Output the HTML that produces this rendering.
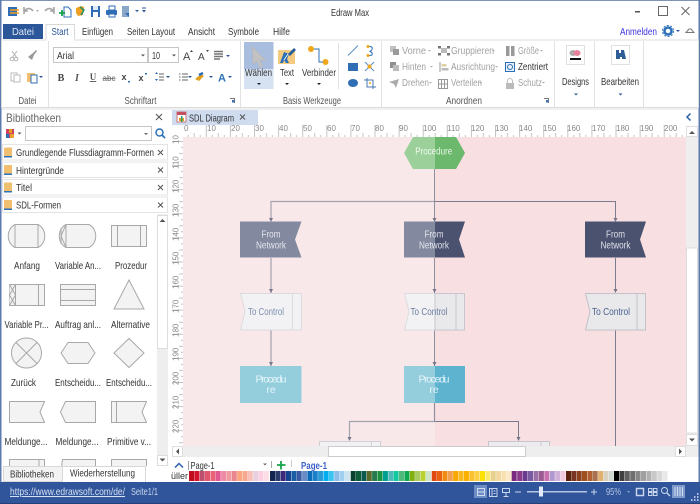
<!DOCTYPE html>
<html><head><meta charset="utf-8"><style>
html,body{margin:0;padding:0;background:#fff}
svg{display:block;font-family:"Liberation Sans",sans-serif;font-size:10.5px}
.g{fill:#a2a2a2}.d{fill:#333}.w{fill:#fff;text-anchor:middle}.m{text-anchor:middle}
.r{font-size:8px;fill:#888}
</style></head><body>
<svg width="700" height="504" viewBox="0 0 700 504" xmlns="http://www.w3.org/2000/svg">
<defs>
<pattern id="tx" x="181.7" y="125" width="24.1" height="12" patternUnits="userSpaceOnUse"><path d="M.5 0V12M6.5 10V12M12.5 8V12M18.5 10V12" stroke="#c4c4c4" stroke-width="1" fill="none"/></pattern>
<pattern id="ty" x="172" y="141" width="11" height="24.1" patternUnits="userSpaceOnUse"><path d="M0 .5H11M9 6.5H11M7 12.5H11M9 18.5H11" stroke="#c4c4c4" stroke-width="1" fill="none"/></pattern>
</defs>
<rect width="700" height="504" fill="#fff"/>
<rect width="700" height="1" fill="#7f92b8"/>
<rect y="0" width="1.5" height="504" fill="#5b7ab0"/>
<rect x="698.5" y="0" width="1.5" height="504" fill="#5b7ab0"/>

<!-- title bar -->
<g>
<path d="M8 7h9v9H8z" fill="#2f6db5"/><path d="M10 10h9M10 13h9" stroke="#f0a020" stroke-width="1.5"/>
<path d="M24 14c0-6 6-7 9-3M24 7v4h4" fill="none" stroke="#a5a5a5" stroke-width="1.6"/><path d="M36 10h3l-1.500 2z" fill="#aaa"/>
<path d="M54 14c0-6-6-7-9-3M54 7v4h-4" fill="none" stroke="#a5a5a5" stroke-width="1.6"/>
<path d="M64 7h4l3 3v7h-7z" fill="#fff" stroke="#2f6db5"/><path d="M59 13h6M62 10v6" stroke="#16a34a" stroke-width="1.800"/>
<path d="M76 8l5-2 3 1-1 8-5 1-2-3z" fill="#f0a020"/><path d="M80 7l4 3-3 5" fill="none" stroke="#1f8f6d" stroke-width="1.500"/>
<path d="M91 6h9v11h-9z" fill="#2f6db5"/><rect x="93" y="6" width="5" height="4" fill="#dce8f5"/><rect x="93" y="12" width="5" height="5" fill="#fff"/>
<path d="M109 6h6v4h-6z" fill="#fff" stroke="#2f6db5"/><rect x="106" y="10" width="11" height="5" rx="1" fill="#2f6db5"/><rect x="109" y="14" width="6" height="3" fill="#fff" stroke="#2f6db5"/>
<path d="M122 6h7v11h-7z" fill="#8aa6c8"/><path d="M125 13l4 4v-4z" fill="#2f6db5"/>
<path d="M135 10h4l-2 2z" fill="#2f5597"/><path d="M142 10h4l-2 2.500z" fill="#2f5597"/><rect x="142" y="7.500" width="4" height="1" fill="#2f5597"/>
<text x="350" y="16" class="m" fill="#333" textLength="38" lengthAdjust="spacingAndGlyphs">Edraw Max</text>
<rect x="635" y="11" width="5" height="1.500" fill="#555"/>
<rect x="658.500" y="6.500" width="9" height="9" fill="none" stroke="#666"/>
<path d="M681.500 7l8 8M689.500 7l-8 8" stroke="#666"/>
</g>

<!-- tabs -->
<rect x="3" y="24" width="40" height="15" fill="#2b579a"/>
<text x="23" y="35" fill="#dfe8f5" text-anchor="middle" textLength="22" lengthAdjust="spacingAndGlyphs">Datei</text>
<rect x="1.500" y="40" width="697" height="67.500" fill="#fff" stroke="#dcdcdc"/>
<path d="M46 40.500V24.500H74.500V40.500" fill="#fff" stroke="#d8d8d8"/><rect x="46.500" y="39" width="28" height="3" fill="#fff"/>
<text x="60" y="35" class="m" fill="#2b579a" textLength="17" lengthAdjust="spacingAndGlyphs">Start</text>
<text x="82" y="35" class="d" textLength="31" lengthAdjust="spacingAndGlyphs">Einfügen</text>
<text x="127" y="35" class="d" textLength="48" lengthAdjust="spacingAndGlyphs">Seiten Layout</text>
<text x="188" y="35" class="d" textLength="27" lengthAdjust="spacingAndGlyphs">Ansicht</text>
<text x="228" y="35" class="d" textLength="31" lengthAdjust="spacingAndGlyphs">Symbole</text>
<text x="273" y="35" class="d" textLength="17" lengthAdjust="spacingAndGlyphs">Hilfe</text>
<text x="620" y="35" fill="#3d35e0" textLength="37" lengthAdjust="spacingAndGlyphs">Anmelden</text>
<circle cx="668" cy="31" r="3.500" fill="none" stroke="#2b70b8" stroke-width="2.500"/><circle cx="668" cy="31" r="5.500" fill="none" stroke="#2b70b8" stroke-width="1" stroke-dasharray="2 1.500"/>
<path d="M676 30h4l-2 2z" fill="#2f5597"/>
<path d="M686 32.500l3-3.500h2l3 3.500z" fill="none" stroke="#777"/>

<!-- ribbon separators -->
<path d="M48.500 41V107M240.500 41V107M338.500 43V89M381.500 41V107M554.500 41V107M594.500 41V107M643.500 41V107" stroke="#e2e2e2"/>

<!-- clipboard -->
<g stroke="#b5b5b5" fill="none"><circle cx="12" cy="59" r="1.800"/><circle cx="16" cy="59" r="1.800"/><path d="M12 51l5 7M17 51l-5 7"/></g>
<path d="M28 57l5-4 3-3 1 1-3 4-2 5z" fill="#999"/>
<rect x="11" y="73" width="6" height="8" fill="#fff" stroke="#bbb"/><rect x="14" y="75" width="6" height="7" fill="#fff" stroke="#bbb"/>
<rect x="27" y="73" width="8" height="9" fill="#f0c070"/><rect x="31" y="75" width="6" height="8" fill="#fff" stroke="#2f6db5"/>
<path d="M39 76h4l-2 2z" fill="#2f5597"/>
<text x="27.500" y="104" class="m" fill="#555" textLength="18" lengthAdjust="spacingAndGlyphs">Datei</text>

<!-- font -->
<rect x="53.500" y="47.500" width="94" height="15" fill="#fff" stroke="#c6c6c6"/>
<rect x="148.500" y="47.500" width="30" height="15" fill="#fff" stroke="#c6c6c6"/>
<text x="57" y="59" class="d" textLength="17" lengthAdjust="spacingAndGlyphs">Arial</text>
<text x="152" y="59" class="d" textLength="8" lengthAdjust="spacingAndGlyphs">10</text>
<path d="M141 54.500h4l-2 2zM172 54.500h4l-2 2z" fill="#555"/>
<text x="183" y="60" fill="#444" font-size="11">A</text><text x="198" y="60" fill="#444" font-size="10">A</text>
<path d="M190 52l1.500-2 1.500 2zM206 50l1.500 2 1.500-2z" fill="#444"/>
<path d="M214 51.500h9M214 54h9M214 56.500h9M214 59h6" stroke="#777" stroke-width="1.500"/><path d="M226 55h4l-2 2z" fill="#2f5597"/>
<text x="61" y="81" class="m" fill="#444" font-weight="bold" font-family="Liberation Serif" font-size="10">B</text>
<text x="77" y="81" class="m" fill="#555" font-style="italic" font-weight="bold" font-family="Liberation Serif" font-size="10">I</text>
<text x="93" y="80" class="m" fill="#555" font-weight="bold" font-family="Liberation Serif" font-size="9" text-decoration="underline">U</text>
<text x="109" y="81" class="m" fill="#666" font-size="8" text-decoration="line-through">abc</text>
<text x="124" y="80" class="m" fill="#444" font-weight="bold" font-size="9">x</text><rect x="128" y="81" width="2" height="1.500" fill="#2b70b8"/>
<text x="141" y="81" class="m" fill="#444" font-weight="bold" font-size="9">x</text><rect x="145" y="73" width="2" height="1.500" fill="#2b70b8"/>
<path d="M155 74l1.500-2 1.500 2zM155 79l1.500 2 1.500-2z" fill="#2b70b8"/><path d="M159 74h5M159 77h5M159 80h5" stroke="#666"/><path d="M166 76h4l-2 2z" fill="#2f5597"/>
<path d="M179 74h9M179 77h9M179 80h9" stroke="#666" stroke-dasharray="1.500 1.500 6"/><path d="M188 76h4l-2 2z" fill="#2f5597"/>
<path d="M195 79l6-5 3 2-5 5z" fill="#e0a020"/><path d="M199 75l4-2" stroke="#2b70b8" stroke-width="2.500"/><path d="M209 76h4l-2 2z" fill="#2f5597"/>
<text x="222" y="81.500" class="m" fill="#2b70b8" font-weight="bold" font-size="11">A</text><path d="M228 76h4l-2 2z" fill="#2f5597"/>
<text x="140.500" y="104" class="m" fill="#555" textLength="32" lengthAdjust="spacingAndGlyphs">Schriftart</text>
<path d="M230 98.500h4.500v4.500" fill="none" stroke="#777"/><rect x="232" y="100" width="2.500" height="2.500" fill="#3d6fb0"/>

<!-- tools -->
<rect x="244" y="42" width="29.500" height="27" fill="#a9bedf"/>
<rect x="244" y="69" width="29.500" height="20" fill="#d6e1f2"/>
<path d="M252 46l14 15-6-1 3 7-3 1-3-7-4 4z" fill="#c2c2c2" stroke="#b0b0b0" stroke-width=".5"/>
<text x="258.500" y="76" class="m" fill="#333" textLength="27" lengthAdjust="spacingAndGlyphs">Wählen</text>
<path d="M257 83h4l-2 2z" fill="#223"/>
<rect x="278" y="50" width="17" height="14" fill="#f4cb80"/>
<path d="M280 63l4-11 5 2-2 5 2 4h-3l-2-3-1 3z" fill="#2b70b8"/><path d="M288 54l6-6 2 2-6 6z" fill="#2b5c9a"/><path d="M284 60l4-6" stroke="#fff" stroke-width=".8"/>
<text x="287" y="76" class="m" fill="#333" textLength="14" lengthAdjust="spacingAndGlyphs">Text</text>
<path d="M285 83h4l-2 2z" fill="#223"/>
<circle cx="311" cy="49" r="3" fill="#eea71a"/><circle cx="325.500" cy="62" r="3" fill="#eea71a"/>
<path d="M314 49h5v13h4" fill="none" stroke="#2b70b8" stroke-width="1"/>
<text x="319" y="76" class="m" fill="#333" textLength="34" lengthAdjust="spacingAndGlyphs">Verbinder</text>
<path d="M317 83h4l-2 2z" fill="#223"/>
<path d="M348 55.500l10-10" stroke="#5a8fc8"/>
<path d="M367 46.500h3c3 0 3 3 0 5c3 1 3 4 0 4h-3" fill="none" stroke="#2b70b8"/><circle cx="368" cy="46.500" r="1.500" fill="#eea71a"/><circle cx="368" cy="55.500" r="1.500" fill="#eea71a"/>
<rect x="348" y="63" width="10" height="8" fill="#2f6db5"/>
<path d="M365 62l9 9M374 62l-9 9" stroke="#5a8fc8"/><circle cx="369.500" cy="66.500" r="2" fill="#eea71a"/>
<ellipse cx="353" cy="83" rx="5" ry="4" fill="#2f6db5"/>
<path d="M367 78v9h9M364 80h9v9" fill="none" stroke="#4a7ab5"/><circle cx="370" cy="83" r="1" fill="#eea71a"/>
<text x="312" y="104" class="m" fill="#555" textLength="58" lengthAdjust="spacingAndGlyphs">Basis Werkzeuge</text>

<!-- Anordnen -->
<g fill="#9f9f9f">
<rect x="390" y="46" width="6" height="6" fill="#c0c0c0"/><rect x="393" y="49" width="6" height="6" fill="#9a9a9a"/>
<rect x="390" y="62" width="6" height="6" fill="#8f8f8f"/><rect x="393" y="65" width="6" height="6" fill="#bbb"/>
<path d="M389 82l10-3-3 9-2-4z" fill="#aaa"/>
<rect x="438" y="46" width="3" height="2.500" fill="#777"/><rect x="447" y="46" width="3" height="2.500" fill="#777"/><rect x="438" y="53" width="3" height="2.500" fill="#777"/><rect x="447" y="53" width="3" height="2.500" fill="#777"/><rect x="441" y="48" width="6" height="5" fill="#bbb"/>
<path d="M440 62v10" stroke="#999"/><rect x="441.500" y="64" width="5" height="2.500" fill="#ddd2a0"/><rect x="441.500" y="68" width="7" height="2.500" fill="#bbb"/>
<path d="M438.500 79.500h9v9h-9zM441.500 79.500v9M444.500 79.500v9M438.500 84h9" fill="none" stroke="#999"/>
<rect x="506" y="46" width="3.500" height="10" fill="#999"/><rect x="511" y="46" width="3.500" height="10" fill="#999"/>
<rect x="505.500" y="62.500" width="9" height="9" fill="#eaf1fa" stroke="#2b70b8"/><circle cx="510" cy="67" r="2.500" fill="none" stroke="#2b70b8"/>
<rect x="506" y="83" width="8" height="6" fill="#bbb"/><path d="M507.500 83v-2a2.500 2.500 0 0 1 5 0v2" fill="none" stroke="#bbb"/>
</g>
<g class="g">
<text x="402" y="54" textLength="24" lengthAdjust="spacingAndGlyphs">Vorne</text>
<text x="402" y="70" textLength="24" lengthAdjust="spacingAndGlyphs">Hinten</text>
<text x="402" y="86" textLength="27" lengthAdjust="spacingAndGlyphs">Drehen</text>
<text x="451" y="54" textLength="43" lengthAdjust="spacingAndGlyphs">Gruppieren</text>
<text x="451" y="70" textLength="44" lengthAdjust="spacingAndGlyphs">Ausrichtung</text>
<text x="451" y="86" textLength="31" lengthAdjust="spacingAndGlyphs">Verteilen</text>
<text x="518" y="54" textLength="21" lengthAdjust="spacingAndGlyphs">Größe</text>
<text x="518" y="86" textLength="24" lengthAdjust="spacingAndGlyphs">Schutz</text>
</g>
<text x="518" y="70" fill="#333" textLength="30" lengthAdjust="spacingAndGlyphs">Zentriert</text>
<path d="M428 50h3l-1.500 1.500zM430 66h3l-1.500 1.500zM429 82h3l-1.500 1.500zM492 50h3l-1.500 1.500zM495 66h3l-1.500 1.500zM479 82h3l-1.500 1.500zM540 50h3l-1.500 1.500zM542 82h3l-1.500 1.500z" fill="#aaa"/>
<text x="464" y="104" class="m" fill="#555" textLength="36" lengthAdjust="spacingAndGlyphs">Anordnen</text>
<path d="M544 98.500h4.500v4.500" fill="none" stroke="#777"/><rect x="546" y="100" width="2.500" height="2.500" fill="#3d6fb0"/>

<!-- Designs / Bearbeiten -->
<rect x="566.500" y="45.500" width="18" height="19" fill="#fff" stroke="#e0e0e0"/>
<ellipse cx="573" cy="53" rx="3.500" ry="3" fill="#aaa"/><ellipse cx="577" cy="53" rx="3.500" ry="3" fill="#e8809a"/><rect x="570" y="58" width="11" height="2" fill="#111"/>
<text x="575.500" y="85" class="m" fill="#333" textLength="27" lengthAdjust="spacingAndGlyphs">Designs</text>
<path d="M574 93.500h4l-2 2z" fill="#2f5597"/>
<rect x="611.500" y="45.500" width="18" height="19" fill="#fff" stroke="#e0e0e0"/>
<path d="M616 50h3v3h2v-3h3l2 9h-4v-2h-2v2h-4z" fill="#2f5e97"/>
<text x="620" y="85" class="m" fill="#333" textLength="38" lengthAdjust="spacingAndGlyphs">Bearbeiten</text>
<path d="M618.500 93.500h4l-2 2z" fill="#2f5597"/>

<rect x="1.500" y="108" width="697" height="2" fill="#f0f0f0"/>

<!-- left panel -->
<text x="6" y="122" fill="#666" font-size="12" textLength="55" lengthAdjust="spacingAndGlyphs">Bibliotheken</text>
<path d="M156 114l6 6M162 114l-6 6" stroke="#555"/>
<rect x="6" y="129" width="8" height="9" fill="#d04060"/><rect x="9" y="129" width="3" height="4" fill="#e0a020"/><rect x="6" y="134" width="3" height="4" fill="#2b70b8"/><rect x="10" y="134" width="4" height="4" fill="#f0a030"/>
<path d="M17.500 132.500h4l-2 2z" fill="#555"/>
<rect x="25.500" y="126.500" width="126" height="14" fill="#fff" stroke="#c6c6c6"/>
<path d="M144 133h4l-2 2z" fill="#666"/>
<circle cx="159.500" cy="132.500" r="3.500" fill="none" stroke="#2b70b8" stroke-width="1.500"/><path d="M162 135l3 3" stroke="#2b70b8" stroke-width="1.800"/>
<g fill="#fff" stroke="#e4e4e4">
<rect x="2.500" y="144.500" width="165" height="15.500"/><rect x="2.500" y="162" width="165" height="15.500"/><rect x="2.500" y="179.500" width="165" height="15.500"/><rect x="2.500" y="197" width="165" height="15.500"/>
</g>
<g><rect x="4" y="147.500" width="8" height="10" fill="#f0c070"/><rect x="4" y="156" width="8" height="1.500" fill="#2b70b8"/>
<rect x="4" y="165" width="8" height="10" fill="#f0c070"/><rect x="4" y="173.500" width="8" height="1.500" fill="#2b70b8"/>
<rect x="4" y="182.500" width="8" height="10" fill="#f0c070"/><rect x="4" y="191" width="8" height="1.500" fill="#2b70b8"/>
<rect x="4" y="200" width="8" height="10" fill="#f0c070"/><rect x="4" y="208.500" width="8" height="1.500" fill="#2b70b8"/></g>
<text x="16" y="156" class="d" textLength="138" lengthAdjust="spacingAndGlyphs">Grundlegende Flussdiagramm-Formen</text>
<text x="16" y="174" class="d" textLength="48" lengthAdjust="spacingAndGlyphs">Hintergründe</text>
<text x="16" y="191" class="d" textLength="16" lengthAdjust="spacingAndGlyphs">Titel</text>
<text x="16" y="208.500" class="d" textLength="45" lengthAdjust="spacingAndGlyphs">SDL-Formen</text>
<path d="M158 150l5 5M163 150l-5 5M158 167.500l5 5M163 167.500l-5 5M158 185l5 5M163 185l-5 5M158 202.500l5 5M163 202.500l-5 5" stroke="#555"/>

<!-- library scrollbar -->
<rect x="157" y="214" width="11" height="252" fill="#eee"/>
<rect x="157.500" y="215.500" width="10" height="133" fill="#fff" stroke="#ddd"/>
<rect x="157.500" y="455.500" width="10" height="10" fill="#fff" stroke="#ddd"/>
<path d="M159.500 222l3-3 3 3zM159.500 458.500l3 3 3-3z" fill="#555"/>

<!-- library shapes -->
<g fill="#f3f3f3" stroke="#a8a8a8">
<path d="M15 224.500H38C47 229 47 243 38 247.500H15C6 243 6 229 15 224.500Z"/><path d="M15 224.500V247.500M38 224.500V247.500"/>
<path d="M66 224.500H89C98 229 98 243 89 247.500H66C57 243 57 229 66 224.500Z"/><path d="M66 224.500V247.500M61 228V244M66 224.500L61 236L66 247.500"/>
<rect x="111.500" y="225.500" width="35" height="21"/><path d="M117.500 225.500V246.500M140.500 225.500V246.500"/>
<rect x="9.500" y="284.500" width="35" height="21"/><path d="M15.500 284.500V305.500M38.500 284.500V305.500M9.500 284.500L15.500 295L9.500 305.500M15.500 284.500L9.500 295L15.500 305.500"/>
<rect x="60.500" y="284.500" width="35" height="21"/><path d="M60.500 289.500H95.500M60.500 300.500H95.500"/>
<path d="M129 280L144 309H114Z"/>
<circle cx="26.500" cy="353" r="15"/><path d="M16 342.500L37 363.500M37 342.500L16 363.500"/>
<path d="M68 342.500H88L95 353L88 363.500H68L61 353Z"/>
<path d="M129 338.500L144 353L129 367.500L114 353Z"/>
<path d="M9.500 401.500H44.500L40 412L44.500 422.500H9.500Z"/>
<path d="M65.500 401.500H95.500V422.500H65.500L60.500 412Z"/>
<path d="M111.500 401.500H146.500L142 412L146.500 422.500H111.500Z"/><path d="M116.500 401.500V422.500"/>
<path d="M9.500 459.500H44.500V475H9.500Z"/><path d="M39 459.500V475"/>
<path d="M62.500 459.500H95.500V475H60.500Z"/>
<path d="M111.500 459.500H146.500V475H111.500Z"/>
</g>
<g fill="#333">
<text x="27" y="269" class="m" textLength="26" lengthAdjust="spacingAndGlyphs">Anfang</text>
<text x="78" y="269" class="m" textLength="46" lengthAdjust="spacingAndGlyphs">Variable An...</text>
<text x="131" y="269" class="m" textLength="32" lengthAdjust="spacingAndGlyphs">Prozedur</text>
<text x="26.500" y="328" class="m" textLength="44" lengthAdjust="spacingAndGlyphs">Variable Pr...</text>
<text x="78" y="328" class="m" textLength="46" lengthAdjust="spacingAndGlyphs">Auftrag anl...</text>
<text x="130.500" y="328" class="m" textLength="39" lengthAdjust="spacingAndGlyphs">Alternative</text>
<text x="23.500" y="386" class="m" textLength="25" lengthAdjust="spacingAndGlyphs">Zurück</text>
<text x="78" y="386" class="m" textLength="46" lengthAdjust="spacingAndGlyphs">Entscheidu...</text>
<text x="129" y="386" class="m" textLength="46" lengthAdjust="spacingAndGlyphs">Entscheidu...</text>
<text x="26" y="445" class="m" textLength="43" lengthAdjust="spacingAndGlyphs">Meldunge...</text>
<text x="77" y="445" class="m" textLength="43" lengthAdjust="spacingAndGlyphs">Meldunge...</text>
<text x="129" y="445" class="m" textLength="44" lengthAdjust="spacingAndGlyphs">Primitive v...</text>
</g>

<!-- bottom tabs -->
<rect x="1.500" y="466" width="168" height="16" fill="#fff"/>
<rect x="3.500" y="466.500" width="59" height="15" fill="#f3f3f3" stroke="#d8d8d8"/>
<path d="M62.500 482V466.500H145.500V482" fill="#fff" stroke="#d8d8d8"/>
<text x="10" y="477.500" class="d" textLength="44" lengthAdjust="spacingAndGlyphs">Bibliotheken</text>
<text x="70" y="476.500" class="d" textLength="65" lengthAdjust="spacingAndGlyphs">Wiederherstellung</text>

<!-- canvas -->
<rect x="170" y="110" width="528" height="15" fill="#fff"/>
<rect x="172" y="110" width="86" height="15" fill="#cfdcf0"/>
<rect x="177" y="112" width="9" height="10" fill="#fff" stroke="#c77"/><rect x="177" y="112" width="9" height="3" fill="#c45060"/><rect x="179" y="118" width="5" height="3" fill="#e0a020"/><rect x="181" y="116" width="1.500" height="6" fill="#2a9a6a"/>
<text x="189" y="121.500" class="d" textLength="45" lengthAdjust="spacingAndGlyphs">SDL Diagram</text>
<path d="M240 114.500l5 5M245 114.500l-5 5" stroke="#555"/>
<path d="M690.500 113.500l-3.500 3.500 3.500 3.500" fill="none" stroke="#2b5fa8" stroke-width="1.500"/>
<rect x="172" y="125" width="514" height="12" fill="#fff"/>
<rect x="183" y="125" width="503" height="12" fill="url(#tx)"/>
<rect x="172" y="125" width="11" height="321" fill="#fff"/>
<rect x="172" y="137" width="11" height="309" fill="url(#ty)"/>
<g class="r">
<text x="184" y="131">0</text><text x="207" y="131">10</text><text x="231" y="131">20</text><text x="255" y="131">30</text><text x="279" y="131">40</text><text x="303" y="131">50</text><text x="327" y="131">60</text><text x="351" y="131">70</text><text x="375" y="131">80</text><text x="399" y="131">90</text><text x="423" y="131">100</text><text x="447" y="131">110</text><text x="471" y="131">120</text><text x="495" y="131">130</text><text x="519" y="131">140</text><text x="543" y="131">150</text><text x="567" y="131">160</text><text x="592" y="131">170</text><text x="616" y="131">180</text><text x="640" y="131">190</text><text x="664" y="131">200</text>
</g>
<g class="r">
<text transform="translate(178.500 144) rotate(-90)">10</text>
<text transform="translate(178.500 169) rotate(-90)">110</text>
<text transform="translate(178.500 193) rotate(-90)">120</text>
<text transform="translate(178.500 217) rotate(-90)">130</text>
<text transform="translate(178.500 241) rotate(-90)">140</text>
<text transform="translate(178.500 265) rotate(-90)">150</text>
<text transform="translate(178.500 289) rotate(-90)">160</text>
<text transform="translate(178.500 313) rotate(-90)">170</text>
<text transform="translate(178.500 337) rotate(-90)">180</text>
<text transform="translate(178.500 361) rotate(-90)">190</text>
<text transform="translate(178.500 385) rotate(-90)">200</text>
<text transform="translate(178.500 409) rotate(-90)">210</text>
<text transform="translate(178.500 433) rotate(-90)">220</text>
</g>
<rect x="183" y="137" width="252" height="309" fill="#f9e8e9"/>
<rect x="435" y="137" width="251" height="309" fill="#f8dfe2"/>

<!-- connectors -->
<g fill="none" stroke="#a3a3ae" stroke-width="1.200">
<path d="M271 218V201.500H434.500"/>
<path d="M271 258V293M271 330V366"/>
<path d="M434.500 403V421.500H349.500V438"/>
</g>
<path d="M434.500 169V221M434.500 258V293M434.500 330V366M434.500 403V421" fill="none" stroke="#8f8f9e"/>
<path d="M434.500 201.500H615.500V218M615.500 258V290M615.500 330V446M434.500 421.500H518.500V438" fill="none" stroke="#7c7c8e"/>
<path d="M269 218h4l-2 4zM432.500 218h4l-2 4zM613.500 218h4l-2 4z" fill="#77778a"/>
<path d="M269 289h4l-2 4zM432.500 289h4l-2 4zM613.500 289h4l-2 4zM269 362h4l-2 4zM432.500 362h4l-2 4zM347.500 437h4l-2 4zM516.500 437h4l-2 4z" fill="#77778a"/>

<!-- procedure hex -->
<path d="M404 153L413 137H435V169H413Z" fill="#9bd09b"/>
<path d="M435 137H456L465 153L456 169H435Z" fill="#6cb86c"/>
<text x="433.700" y="154.500" class="w" fill-opacity=".85" textLength="37" lengthAdjust="spacingAndGlyphs">Procedure</text>
<!-- from network -->
<path d="M240 221.500H301.500L295 239.500L301.500 257.500H240Z" fill="#838a9f"/>
<path d="M404 221.500H435V257.500H404Z" fill="#838a9f"/>
<path d="M435 221.500H465L459 239.500L465 257.500H435Z" fill="#4a5270"/>
<path d="M585 221.500H646L640 239.500L646 257.500H585Z" fill="#4a5270"/>
<g fill="#eef0f5" text-anchor="middle" fill-opacity=".9">
<text x="271" y="237.500" textLength="19" lengthAdjust="spacingAndGlyphs">From</text><text x="271" y="248.500" textLength="30" lengthAdjust="spacingAndGlyphs">Network</text>
<text x="434" y="237.500" textLength="19" lengthAdjust="spacingAndGlyphs">From</text><text x="434" y="248.500" textLength="30" lengthAdjust="spacingAndGlyphs">Network</text>
<text x="615.500" y="237.500" textLength="19" lengthAdjust="spacingAndGlyphs">From</text><text x="615.500" y="248.500" textLength="30" lengthAdjust="spacingAndGlyphs">Network</text>
</g>
<!-- to control -->
<path d="M240.500 293.500H301.500V330H240.500L245 311.500Z" fill="#f2f2f4" stroke="#dcdce0"/><path d="M292.500 293.500V330" stroke="#dcdce0"/>
<path d="M404.500 293.500H435V330H404.500L409 311.500Z" fill="#f2f2f4" stroke="#dcdce0"/><path d="M435 293.500H464.500V330H435Z" fill="#e9e9ec" stroke="#c6c6cc"/><path d="M456 293.500V330" stroke="#c6c6cc"/>
<path d="M585.500 293.500H645.500V330H585.500L590 311.500Z" fill="#e9e9ec" stroke="#c2c2c8"/><path d="M637 293.500V330" stroke="#c2c2c8"/>
<text x="266" y="315" class="m" fill="#7d8fb0" textLength="36" lengthAdjust="spacingAndGlyphs">To Control</text>
<text x="429" y="315" class="m" fill="#6a7ca0" textLength="37" lengthAdjust="spacingAndGlyphs">To Control</text>
<text x="611" y="315" class="m" fill="#4a5f8e" textLength="38" lengthAdjust="spacingAndGlyphs">To Control</text>
<!-- procedures -->
<rect x="240" y="366" width="61.500" height="37" fill="#94cedd"/>
<rect x="404" y="366" width="31" height="37" fill="#94cedd"/>
<rect x="435" y="366" width="30" height="37" fill="#5eb3ce"/>
<g fill="#eefafd" text-anchor="middle" fill-opacity=".9">
<text x="271" y="382.500" textLength="31">Procedu</text><text x="271" y="393">re</text>
<text x="434" y="382.500" textLength="31">Procedu</text><text x="434" y="393">re</text>
</g>
<!-- bottom shapes -->
<g fill="#f2f2f4" stroke="#d0d0d5"><rect x="319.500" y="441.500" width="61" height="8"/><path d="M371.500 441.500V449"/></g>
<g fill="#ececef" stroke="#c6c6cc"><rect x="488.500" y="441.500" width="61" height="8"/><path d="M541 441.500V449"/></g>

<!-- scrollbars -->
<rect x="686" y="137" width="12.500" height="309" fill="#eee"/>
<rect x="686" y="125" width="12.500" height="12" fill="#fff"/>
<rect x="686.500" y="126.500" width="11" height="10" fill="#fff" stroke="#ddd"/>
<path d="M689 134l3-3 3 3z" fill="#555"/>
<rect x="686.500" y="248" width="11" height="185" fill="#fff" stroke="#ddd"/>
<rect x="686.500" y="434.500" width="11" height="11" fill="#fff" stroke="#ddd"/>
<path d="M689 438.500h6l-3 3z" fill="#555"/>
<rect x="172" y="446" width="526.500" height="11" fill="#eee"/>
<rect x="172.500" y="446.500" width="10" height="10" fill="#fff" stroke="#ddd"/>
<path d="M179 448.500v6l-3-3z" fill="#555"/>
<rect x="328.500" y="446.500" width="197" height="10" fill="#fff" stroke="#ccc"/>
<rect x="675.500" y="446.500" width="10" height="10" fill="#fff" stroke="#ddd"/>
<path d="M679 448.500v6l3-3z" fill="#555"/>

<!-- page bar -->
<rect x="170" y="457" width="528.500" height="25" fill="#fff"/>
<path d="M175 467.500l4-4 4 4" fill="none" stroke="#2b5fa8" stroke-width="1.500"/>
<rect x="188" y="461" width=".8" height="9" fill="#888"/>
<text x="190.500" y="469" class="d" textLength="24" lengthAdjust="spacingAndGlyphs">Page-1</text>
<path d="M263 463.500h4l-2 2z" fill="#666"/>
<rect x="271" y="461" width="1" height="7" fill="#aaa"/>
<path d="M277 465h8.500M281 461v8.500" stroke="#16a34a" stroke-width="1.800"/>
<rect x="291" y="460" width="1" height="7" fill="#ccc"/>
<text x="301" y="469" fill="#3d5fc8" font-weight="bold" textLength="26" lengthAdjust="spacingAndGlyphs">Page-1</text>

<!-- palette -->
<text x="171" y="479" fill="#333" font-size="9" textLength="17" lengthAdjust="spacingAndGlyphs">üller</text>
<g stroke="none">
<rect x="189" y="471" width="5" height="10" fill="#c00d1e"/><rect x="194.300" y="471" width="5" height="10" fill="#d3122b"/><rect x="199.700" y="471" width="5" height="10" fill="#bf4f6e"/><rect x="205" y="471" width="5" height="10" fill="#e0566c"/><rect x="210.400" y="471" width="5" height="10" fill="#e8627a"/><rect x="215.700" y="471" width="5" height="10" fill="#e0588f"/><rect x="221.100" y="471" width="5" height="10" fill="#ec8aa8"/><rect x="226.400" y="471" width="5" height="10" fill="#ee9aa0"/><rect x="231.800" y="471" width="5" height="10" fill="#e9868d"/><rect x="237.100" y="471" width="5" height="10" fill="#f9a57f"/><rect x="242.500" y="471" width="5" height="10" fill="#f4a890"/><rect x="247.800" y="471" width="5" height="10" fill="#f8bfb8"/><rect x="253.200" y="471" width="5" height="10" fill="#e8d0e0"/><rect x="258.500" y="471" width="5" height="10" fill="#fbd0e0"/><rect x="263.900" y="471" width="5" height="10" fill="#fddde5"/>
<rect x="270" y="471" width="5" height="10" fill="#14264f"/><rect x="275.300" y="471" width="5" height="10" fill="#2a3a6a"/><rect x="280.700" y="471" width="5" height="10" fill="#3d2a7a"/><rect x="286" y="471" width="5" height="10" fill="#15438f"/><rect x="291.400" y="471" width="5" height="10" fill="#1a5da5"/><rect x="296.700" y="471" width="5" height="10" fill="#3a5aa5"/><rect x="302.100" y="471" width="5" height="10" fill="#6a8cc5"/><rect x="307.400" y="471" width="5" height="10" fill="#0a6cb8"/><rect x="312.800" y="471" width="5" height="10" fill="#1a80c8"/><rect x="318.100" y="471" width="5" height="10" fill="#2a9ad5"/><rect x="323.500" y="471" width="5" height="10" fill="#00aef0"/><rect x="328.800" y="471" width="5" height="10" fill="#3cc4f0"/><rect x="334.200" y="471" width="5" height="10" fill="#8cbde8"/><rect x="339.500" y="471" width="5" height="10" fill="#a0d0f0"/><rect x="344.900" y="471" width="5" height="10" fill="#cce4f0"/>
<rect x="350.700" y="471" width="5" height="10" fill="#0a4030"/><rect x="356" y="471" width="5" height="10" fill="#0f5a38"/><rect x="361.400" y="471" width="5" height="10" fill="#0a5a50"/><rect x="366.800" y="471" width="5" height="10" fill="#5a6a2a"/><rect x="372.100" y="471" width="5" height="10" fill="#2a7a50"/><rect x="377.500" y="471" width="5" height="10" fill="#1a9040"/><rect x="382.900" y="471" width="5" height="10" fill="#00a090"/><rect x="388.300" y="471" width="5" height="10" fill="#50b8b8"/><rect x="393.600" y="471" width="5" height="10" fill="#10c8a0"/><rect x="399" y="471" width="5" height="10" fill="#50b878"/><rect x="404.400" y="471" width="5" height="10" fill="#10a850"/><rect x="409.800" y="471" width="5" height="10" fill="#80b010"/><rect x="415.100" y="471" width="5" height="10" fill="#a8c860"/><rect x="420.500" y="471" width="5" height="10" fill="#b8d030"/><rect x="425.900" y="471" width="5" height="10" fill="#cce4c8"/>
<rect x="431.700" y="471" width="5" height="10" fill="#e04a10"/><rect x="437" y="471" width="5" height="10" fill="#e86010"/><rect x="442.400" y="471" width="5" height="10" fill="#f08a10"/><rect x="447.800" y="471" width="5" height="10" fill="#f0a050"/><rect x="453.100" y="471" width="5" height="10" fill="#f8a800"/><rect x="458.500" y="471" width="5" height="10" fill="#f8b820"/><rect x="463.900" y="471" width="5" height="10" fill="#fbb000"/><rect x="469.300" y="471" width="5" height="10" fill="#fbc030"/><rect x="474.600" y="471" width="5" height="10" fill="#fcd040"/><rect x="480" y="471" width="5" height="10" fill="#fce000"/><rect x="485.400" y="471" width="5" height="10" fill="#fbe870"/><rect x="490.800" y="471" width="5" height="10" fill="#e8d090"/><rect x="496.100" y="471" width="5" height="10" fill="#f0d8a0"/><rect x="501.500" y="471" width="5" height="10" fill="#f8e0b0"/><rect x="506.900" y="471" width="5" height="10" fill="#fbe8c8"/>
<rect x="511.700" y="471" width="5" height="10" fill="#7a2a80"/><rect x="517.200" y="471" width="5" height="10" fill="#8a3a88"/><rect x="522.600" y="471" width="5" height="10" fill="#6a3a90"/><rect x="528" y="471" width="5" height="10" fill="#7a5aa0"/><rect x="533.500" y="471" width="5" height="10" fill="#9a70a8"/><rect x="538.900" y="471" width="5" height="10" fill="#9a5a90"/><rect x="544.300" y="471" width="5" height="10" fill="#c870b0"/><rect x="549.800" y="471" width="5" height="10" fill="#b098d0"/><rect x="555.200" y="471" width="5" height="10" fill="#d0b0d8"/><rect x="560.600" y="471" width="5" height="10" fill="#f0c8e0"/>
<rect x="566" y="471" width="5" height="10" fill="#5a2010"/><rect x="571.300" y="471" width="5" height="10" fill="#783420"/><rect x="576.700" y="471" width="5" height="10" fill="#8a4020"/><rect x="582" y="471" width="5" height="10" fill="#a05020"/><rect x="587.400" y="471" width="5" height="10" fill="#b06030"/><rect x="592.700" y="471" width="5" height="10" fill="#a87050"/><rect x="598.100" y="471" width="5" height="10" fill="#e0b070"/><rect x="603.400" y="471" width="5" height="10" fill="#d8d0c0"/><rect x="608.800" y="471" width="5" height="10" fill="#d0d8d0"/>
<rect x="614" y="471" width="5" height="10" fill="#000"/><rect x="619.400" y="471" width="5" height="10" fill="#404040"/><rect x="624.800" y="471" width="5" height="10" fill="#606060"/><rect x="630.200" y="471" width="5" height="10" fill="#707070"/><rect x="635.600" y="471" width="5" height="10" fill="#888"/><rect x="641" y="471" width="5" height="10" fill="#a0a0a0"/><rect x="646.400" y="471" width="5" height="10" fill="#b0b0b0"/><rect x="651.800" y="471" width="5" height="10" fill="#c8c8c8"/><rect x="657.200" y="471" width="5" height="10" fill="#d8d8d8"/><rect x="662.600" y="471" width="5" height="10" fill="#e8e8e8"/>
</g>

<!-- status bar -->
<rect y="482" width="700" height="22" fill="#30559b"/>
<rect y="503" width="700" height="1" fill="#234178"/>
<text x="10" y="495" fill="#d5e0f2" text-decoration="underline" textLength="115" lengthAdjust="spacingAndGlyphs">https://www.edrawsoft.com/de/</text>
<text x="131" y="495" fill="#c8d5ec" textLength="27" lengthAdjust="spacingAndGlyphs">Seite1/1</text>
<rect x="474" y="485" width="13" height="13" fill="#6d8cc4"/>
<path d="M477.500 488.500h7v7h-7zM477.500 492h7" fill="none" stroke="#cfdcf0"/>
<path d="M489.500 488.500h7.500v8h-7.500zM492 488.500v8M493.500 491h2M493.500 493.500h2" fill="none" stroke="#c8d5ec"/>
<path d="M502.500 488.500h7v4h-7zM506 492.500v4M503.500 496.500h5" fill="none" stroke="#c8d5ec"/>
<path d="M515 492h6" stroke="#c8d5ec"/>
<rect x="527" y="491" width="60" height="1.500" fill="#b5c5e2"/>
<rect x="539" y="486.500" width="4" height="10" fill="#e4ebf6"/>
<path d="M591 492h6M594 489v6" stroke="#c8d5ec"/>
<text x="606" y="495" fill="#b5c5e2" textLength="15" lengthAdjust="spacingAndGlyphs">95%</text>
<path d="M627 491h3l-1.500 2z" fill="#8aa0c8"/>
<rect x="636.500" y="488.500" width="7" height="7" fill="none" stroke="#c8d5ec" stroke-width="1.500"/>
<path d="M648.500 488.500h3.500v3h-3.500zM653.500 488.500h3.500v3h-3.500zM648.500 492.500h3.500v3h-3.500zM653.500 492.500h3.500v3h-3.500z" fill="none" stroke="#c8d5ec"/>
<circle cx="664.500" cy="490.500" r="3" fill="none" stroke="#c8d5ec"/><path d="M667 493l3 3" stroke="#c8d5ec" stroke-width="1.300"/>
<rect x="672" y="485" width="13" height="13" fill="#7f9bcc"/>
<path d="M675 487v9M677.500 487v9M680 487v9M682.500 487v9" stroke="#cfdcf0"/>
<path d="M694 500h1.500M691 500h1.500M697 500h1.500M694 497h1.500M697 497h1.500M697 494h1.500" stroke="#dfe6f3" stroke-width="1.500"/>
</svg>
</body></html>
